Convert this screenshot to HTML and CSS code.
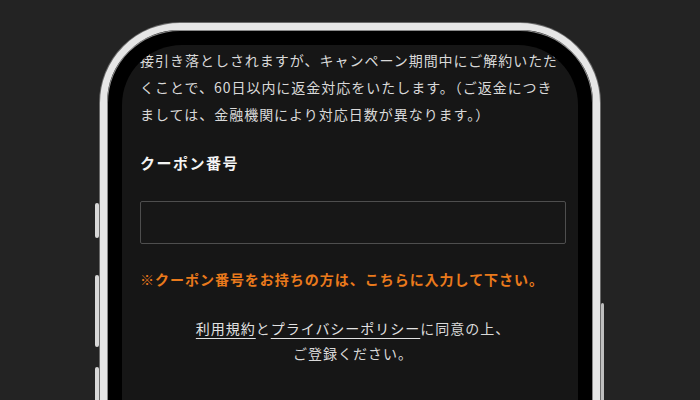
FILE: index.html
```html
<!DOCTYPE html>
<html lang="ja">
  <head>
    <meta charset="UTF-8" />
    <meta name="viewport" content="width=device-width, initial-scale=1.0" />
    <title>クーポン番号</title>
    <link rel="stylesheet" href="styles.css">
  </head>
  <body>
    <div class="phone">
      <span class="side-btn btn-1"></span>
      <span class="side-btn btn-2"></span>
      <span class="side-btn btn-3"></span>
      <span class="side-btn btn-right"></span>
      <div class="screen">
        <p class="notice">
          接引き落としされますが、キャンペーン期間中にご解約いただくことで、60日以内に返金対応をいたします。（ご返金につきましては、金融機関により対応日数が異なります。）
        </p>
        <form class="coupon-form" onsubmit="event.preventDefault();">
          <h2>クーポン番号</h2>
          <input type="text" class="coupon-input" />
          <p class="coupon-note">※クーポン番号をお持ちの方は、こちらに入力して下さい。</p>
          <p class="terms">
            <a href="#">利用規約</a>と<a href="#">プライバシーポリシー</a>に同意の上、<br />ご登録ください。
          </p>
        </form>
      </div>
    </div>
  </body>
</html>
```

FILE: styles.css
```css
* {
  box-sizing: border-box;
  margin: 0;
  padding: 0;
}

body {
  font-family: "Noto Sans CJK JP", "Noto Sans", sans-serif;
  background-color: #232323;
  height: 400px;
  overflow: hidden;
}

.phone {
  position: relative;
  width: 500px;
  height: 520px;
  margin: 23px 0 0 100px;
  background-color: #000;
  border: 7px solid #e6e6e6;
  border-radius: 80px;
  padding: 15px;
  box-shadow: inset 0 0 0 1px #8a8a8a, 0 0 0 1px #6a6a6a;
}

.side-btn {
  position: absolute;
  width: 4px;
  background-color: #d8d8d8;
  border-radius: 2px;
}

.btn-1 {
  left: -12px;
  top: 173px;
  height: 35px;
}

.btn-2 {
  left: -12px;
  top: 245px;
  height: 72px;
}

.btn-3 {
  left: -12px;
  top: 337px;
  height: 72px;
}

.btn-right {
  right: -11px;
  top: 273px;
  height: 110px;
  width: 3px;
  background-color: #bdbdbd;
}

.screen {
  height: 100%;
  background-color: #161616;
  border-radius: 60px;
  overflow: hidden;
  padding: 2px 12px 0 18px;
  color: #d9d9d9;
  font-size: 14px;
}

.notice {
  line-height: 27px;
  letter-spacing: 0.07em;
  margin-right: 6px;
}

.coupon-form h2 {
  margin-top: 23px;
  font-size: 15px;
  line-height: 24px;
  font-weight: bold;
  letter-spacing: 0.1em;
  color: #f4f4f4;
}

.coupon-input {
  display: block;
  width: 100%;
  height: 43px;
  margin-top: 26px;
  background-color: #171717;
  border: 1px solid #4e4e4e;
  border-radius: 2px;
  color: #fff;
  font-size: 14px;
  padding: 0 10px;
}

.coupon-note {
  margin-top: 23px;
  line-height: 24px;
  letter-spacing: 0.07em;
  color: #ea7a1c;
  font-weight: bold;
}

.terms {
  margin-top: 25px;
  line-height: 25px;
  letter-spacing: 0.07em;
  text-align: center;
}

.terms a {
  color: #e2e2e2;
  text-decoration: underline;
  text-underline-offset: 4px;
  text-decoration-thickness: 1px;
}
```
